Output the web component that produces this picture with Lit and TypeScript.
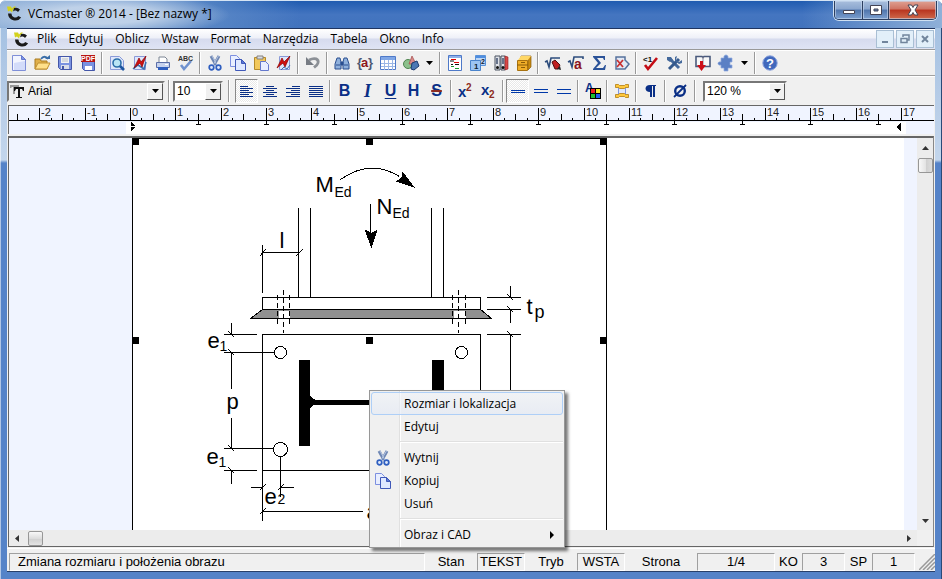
import { LitElement, html, svg, css, nothing } from "lit";
import { customElement } from "lit/decorators.js";
import { classMap } from "lit/directives/class-map.js";

const logo = svg`
  <path d="M0 0l1 5 2-1 2 2 1-3 3-3H7L5 2 4 0z" fill="#d3d21c"/>
  <path d="M7 1.6A6 6 0 0 1 13 3l-2 2.4A3.4 3.4 0 0 0 6 5z" fill="#1b1b1b"/>
  <path d="M1 7h3.4a3.8 3.8 0 0 0 6.8 2.4l3 1.6A7.3 7.3 0 0 1 1 7z" fill="#1b1b1b"/>`;

const scissors = svg`
  <path d="M4 1l5 9M12 1L7 10" stroke="#6f87b4" stroke-width="3"/>
  <path d="M5 1l5 9M11.500 1L6 10" stroke="#c4d2ea" stroke-width=".8"/>
  <circle cx="4.500" cy="12.500" r="2.300" fill="#dfe8fa" stroke="#2f5fc0" stroke-width="1.700"/>
  <circle cx="11.500" cy="12.500" r="2.300" fill="#dfe8fa" stroke="#2f5fc0" stroke-width="1.700"/>`;

const copy = svg`
  <path d="M.5.5h6l3 3v8h-9z" fill="#e8eeff" stroke="#7c8fe0"/>
  <path d="M5.500 4.500h6l4 4v7h-10z" fill="#dfe8ff" stroke="#3f58b8"/>
  <path d="M11.500 4.500v4h4z" fill="#5a78d8" stroke="#3f58b8"/>`;

const icons: Record<string, unknown> = {
  new: svg`<path d="M1.500.5h9l4 4v11h-13z" fill="#f2f5ff" stroke="#7f8fd8"/><path d="M3 8l11-2v9H3z" fill="#d3dcfa"/><path d="M10.500.5v4h4z" fill="#7f95e8" stroke="#6478cc"/>`,
  open: svg`<path d="M1 4h5l1 2h6v8H1z" fill="#e0b04a" stroke="#a97a1e"/><path d="M1 14L4 8h12l-3 6z" fill="#ffe08a" stroke="#c09030"/><path d="M7 4c2-3 5-3 7 0" fill="none" stroke="#3a6ea8" stroke-width="1.800"/><path d="M11 4h5V0z" fill="#3a6ea8"/>`,
  save: svg`<path d="M1.500 1.500h13v13h-11l-2-2z" fill="#7a92e0" stroke="#4356a8"/><path d="M4 2h8v6H4z" fill="#f0f2f4"/><path d="M5 4h6M5 6h6" stroke="#b9bec8"/><path d="M4 10h8v4H4z" fill="#d8dce8"/><path d="M5 11h2v3H5z" fill="#4356a8"/>`,
  pdf: svg`<path d="M2.500 4.500h12v11h-10l-2-2z" fill="#7a92e0" stroke="#4356a8"/><path d="M5 11h7v4H5z" fill="#fff"/><path d="M1 0h14v7H1z" fill="#b81414"/><text x="1" y="6" font-size="7" font-weight="bold" fill="#fff">PDF</text>`,
  preview: svg`<path d="M1.500 1.500h9l4 4v9h-13z" fill="#dfe7fb" stroke="#8a9ad8"/><circle cx="8" cy="8" r="4" fill="#b9e4f4" stroke="#2b6ea8" stroke-width="1.600"/><path d="M11 11l4 4" stroke="#1c56a0" stroke-width="2.600"/>`,
  pageCheck: svg`<path d="M2.500 1.500h11v13h-11z" fill="#dfe7fb" stroke="#8a9ad8"/><path d="M1 14l5-4 6 4 2-7" fill="none" stroke="#3b6fb0" stroke-width="1.600"/><path d="M2 13L7 3l2 4 5-6-4 11-2-4z" fill="#d01010" stroke="#8a0000" stroke-width=".7"/>`,
  print: svg`<path d="M4 8V2h6l2 2v4z" fill="#fff" stroke="#7d8694"/><path d="M1.500 7.500h13v5h-13z" fill="#c6d2ee" stroke="#5a6ea8"/><path d="M3 12h10v3H3z" fill="#2f5fc0"/><path d="M10 9h3v1h-3z" fill="#fff"/>`,
  spell: svg`<text x="0" y="6" font-size="7" font-weight="bold" fill="#333">ABC</text><path d="M3 10l3 4 7-8" fill="none" stroke="#6f92cf" stroke-width="2.600"/>`,
  cut: scissors,
  copy,
  paste: svg`<path d="M1.500 2.500h11v12h-11z" fill="#f2c85a" stroke="#b58a2a"/><path d="M4 1h6v3H4z" fill="#d8dce4" stroke="#85807a"/><path d="M7.500 6.500h5l3 3v6h-8z" fill="#e8eeff" stroke="#6478cc"/>`,
  pageDel: svg`<path d="M3.500 1.500h10v13h-10z" fill="#dfe7fb" stroke="#8a9ad8"/><path d="M5 15l3-3 3 2 3-4" fill="none" stroke="#3b6fb0"/><path d="M1 13L6 3l2 4 6-6-5 11-2-4z" fill="#d01010" stroke="#8a0000" stroke-width=".7"/>`,
  undo: svg`<path d="M4 5c6-3 10-1 9 3-.5 2-2 3-4 4.500" fill="none" stroke="#8c9096" stroke-width="2.800"/><path d="M1 2v8h8z" fill="#777c84"/>`,
  find: svg`<path d="M3 3h3l1 4v7H1V9zM10 3h3l2 6v5H9V7z" fill="#8fb0dc" stroke="#2b4f90"/><path d="M7 7h2v3H7zM2 10h4M10 10h4" stroke="#2b4f90" fill="#2b4f90"/>`,
  brace: svg`<text x="0" y="12" font-size="13" font-weight="bold" fill="#4c5874">{</text><text x="4" y="12" font-size="13" font-weight="bold" fill="#8c1420">a</text><text x="11" y="12" font-size="13" font-weight="bold" fill="#4c5874">}</text>`,
  table: svg`<path d="M.5 1.500h15v13H.5z" fill="#fff" stroke="#4e79c8"/><path d="M1 2h14v3H1z" fill="#7fa6e6"/><path d="M1 8.500h14M1 11.500h14M4.500 5v10M8.500 5v10M12.500 5v10" stroke="#9ab6e6"/>`,
  shapes: svg`<circle cx="5" cy="9" r="4.500" fill="#8cc08c" stroke="#4f8450"/><path d="M9 1l4 8H6z" fill="#d88a8a" stroke="#a04848" stroke-width=".7"/><path d="M9 8l5-2 2 5-5 4-3-1z" fill="#4c78b4" stroke="#1d3c70"/>`,
  doc: svg`<path d="M1.500.5h13v15h-13z" fill="#fff" stroke="#4e79c8"/><path d="M2 1h12v2H2z" fill="#8fb0e8"/><path d="M4 4.500h5M7 7.500h5" stroke="#d00"/><path d="M3 6h4" stroke="#111"/><path d="M4 9.500h2M8 9.500h4" stroke="#111"/><path d="M4 11.500h3M8 13.500h4" stroke="#1a9a30"/>`,
  pages: svg`<path d="M5.500.5h10v10h-10z" fill="#bcd6f6" stroke="#5a92d8"/><path d="M6 1h9v2H6z" fill="#4f8ee0"/><path d="M.5 5.500h10v10H.5z" fill="#9cc4f2" stroke="#4a84cc"/><text x="4" y="14" font-size="8" fill="#123">1</text><text x="11" y="9" font-size="7" fill="#123">2</text>`,
  binders: svg`<path d="M2 1h5v14H2zM8 1h4v14H8z" fill="#dfe2e8" stroke="#4b5260"/><path d="M12 1l3 1v12l-3 1z" fill="#d84848" stroke="#902020" stroke-width=".6"/><path d="M4 3v6M10 3v6" stroke="#68748c" stroke-width="2"/><circle cx="4.500" cy="12.500" r="1.500"/><circle cx="10" cy="12.500" r="1.500"/>`,
  cabinet: svg`<path d="M5 1h10v11l-3 3V4H5z" fill="#c88a10" stroke="#8a5c08" stroke-width=".7"/><path d="M5 1h10l-3 4H2z" fill="#ffd766"/><path d="M1.500 5.500h10v10h-10z" fill="#f0ae28" stroke="#a87210"/><path d="M1 10h11M5 7.500h4M5 12.500h4" stroke="#8a5c08"/>`,
  rootPen: svg`<path d="M0 7l2-1 2 6 2-9h9" fill="none" stroke="#2c4c7c" stroke-width="1.600"/><path d="M7 7l3-2 5 5-2 4-3 0z" fill="#c02020" stroke="#501010"/><path d="M12 14l4 1-1-4z" fill="#222"/>`,
  rootA: svg`<path d="M0 7l2-1 2 6 2-10h9v2" fill="none" stroke="#2c4c7c" stroke-width="1.600"/><text x="6" y="14" font-size="14" font-weight="bold" fill="#8c1420">a</text>`,
  sigma: svg`<path d="M2 1h12v4h-1l-1-2H6l4 5-5 5h7l2-3h1l-1 5H2v-1l5-6-5-6z" fill="#2a5298"/>`,
  housex: svg`<path d="M2 14V2h9v3l4 4-4 5z" fill="#e2e9f5" stroke="#55719c" stroke-width="1.500"/><path d="M3 5l6 7M9 5l-6 7" stroke="#c83030" stroke-width="1.800"/>`,
  check1: svg`<text x="0" y="7" font-size="8" fill="#111">&lt;1</text><path d="M2 10l3 4L14 3" fill="none" stroke="#c40c14" stroke-width="2.600"/>`,
  tools: svg`<path d="M3 3l10 10" stroke="#44699c" stroke-width="3"/><path d="M13 4L3 14" stroke="#34598c" stroke-width="3"/><path d="M1 2h4l2 3-3 2-3-2zM11 1l-1 4 3 2 3-2v3l-3 1-4-3V2z" fill="#44699c"/>`,
  bookDown: svg`<path d="M1 1.500h6l1 1 1-1h6v10H1z" fill="#f8f8f8" stroke="#4a5a7c" stroke-width="1.600"/><path d="M8 2v9" stroke="#889"/><path d="M5 6h3v4h3l-4.500 6L2 10h3z" fill="#cc1018"/>`,
  puzzle: svg`<path d="M6 3c-1-4 5-4 4 0h4v4h-2v3h2v3h-4v3H6v-3H3v-3c-4 1-4-4 0-3V3z" fill="#5b80c4" stroke="#8fabdf" stroke-width=".7"/>`,
  help: svg`<circle cx="8" cy="8" r="7.200" fill="#4168bc" stroke="#8aa2dc"/><text x="4" y="13" font-size="13" font-weight="bold" fill="#fff">?</text>`,
  left: svg`<path d="M1 3.500h8M1 5.500h13M1 7.500h9M1 9.500h13M1 11.500h9M1 13.500h13" stroke="#0a2f86"/>`,
  center: svg`<path d="M4 3.500h8M1 5.500h14M4 7.500h8M1 9.500h14M4 11.500h8M1 13.500h14" stroke="#0a2f86"/>`,
  right: svg`<path d="M7 3.500h8M1 5.500h14M6 7.500h9M1 9.500h14M6 11.500h9M1 13.500h14" stroke="#0a2f86"/>`,
  justify: svg`<path d="M1 3.500h14M1 5.500h14M1 7.500h14M1 9.500h14M1 11.500h14M1 13.500h14" stroke="#0a2f86"/>`,
  line1: svg`<path d="M1 7.500h14M1 9.500h14" stroke="#0038a8"/>`,
  line2: svg`<path d="M1 6.500h14M1 9.500h14" stroke="#0038a8"/>`,
  line3: svg`<path d="M1 6.500h14M1 10.500h14" stroke="#0038a8"/>`,
  sup: svg`<text x="0" y="14" font-size="15" font-weight="bold" fill="#0a2f86">x</text><text x="8" y="8" font-size="10" font-weight="bold" fill="#8c2a20">2</text>`,
  sub: svg`<text x="0" y="12" font-size="15" font-weight="bold" fill="#0a2f86">x</text><text x="8" y="15" font-size="10" font-weight="bold" fill="#8c2a20">2</text>`,
  color: svg`<text x="0" y="9" font-size="12" font-weight="bold" fill="#0a2f86">A</text><path d="M5 5h11v11H5z" fill="#000"/><path d="M6 6h4v4H6z" fill="#f02020"/><path d="M11 6h4v4h-4z" fill="#f8e820"/><path d="M6 11h4v4H6z" fill="#20c030"/><path d="M11 11h4v4h-4z" fill="#2060f0"/>`,
  fit: svg`<path d="M4.500 4.500h7v7h-7z" fill="#dfe7fb" stroke="#7f95e0"/><path d="M1.500 1.500h3l1 1h5l1-1h3v3h-3l-1 1h-5l-1-1h-3zM1.500 11.500h3l1-1h5l1 1h3v3h-3l-1-1h-5l-1 1h-3z" fill="#ffc83c" stroke="#b07c10" stroke-width=".8"/>`,
  para: svg`<path d="M13 2v1h-1v11h-2V3H9v11H7V9C1 9 1 2 7 2z" fill="#0a2f86"/>`,
  diameter: svg`<circle cx="8" cy="8" r="4.800" fill="none" stroke="#0a2f86" stroke-width="2.400"/><path d="M2 14L14 2" stroke="#0a2f86" stroke-width="1.800"/>`,
};

const icon = (name: string) =>
  html`<svg class="icon" viewBox="0 0 16 16" fill="#111" aria-hidden="true">${icons[name]}</svg>`;

type Tool = [string, string];

const mainTools: Tool[][] = [
  [["new", "Nowy"], ["open", "Otwórz"], ["save", "Zapisz"], ["pdf", "PDF"]],
  [["preview", "Podgląd"], ["pageCheck", "Strona"], ["print", "Drukuj"], ["spell", "Pisownia"]],
  [["cut", "Wytnij"], ["copy", "Kopiuj"], ["paste", "Wklej"], ["pageDel", "Usuń stronę"]],
  [["undo", "Cofnij"]],
  [["find", "Znajdź"], ["brace", "Zmienna"], ["table", "Tabela"], ["shapes", "Kształty"], ["drop", "Więcej kształtów"]],
  [["doc", "Dokument"], ["pages", "Strony"], ["binders", "Biblioteka"], ["cabinet", "Archiwum"]],
  [["rootPen", "Edytuj wzór"], ["rootA", "Wzór"], ["sigma", "Suma"], ["housex", "Przekrój"]],
  [["check1", "Sprawdź"], ["tools", "Opcje"]],
  [["bookDown", "Importuj"], ["puzzle", "Dodatki"], ["drop", "Więcej dodatków"]],
  [["help", "Pomoc"]],
];

const formatTools: Tool[][] = [
  [["left", "Do lewej"], ["center", "Do środka"], ["right", "Do prawej"], ["justify", "Wyjustuj"]],
  [["B", "Pogrubienie"], ["I", "Kursywa"], ["U", "Podkreślenie"], ["H", "Wyróżnienie"], ["S", "Przekreślenie"]],
  [["sup", "Indeks górny"], ["sub", "Indeks dolny"]],
  [["line1", "Odstęp 1"], ["line2", "Odstęp 1,5"], ["line3", "Odstęp 2"]],
  [["color", "Kolor"]],
  [["fit", "Dopasuj"]],
  [["para", "Znaki akapitu"]],
  [["diameter", "Średnica"]],
];

const pressed = new Set(["left", "line1"]);

/** Combo box with a classic sunken frame. */
@customElement("combo-box")
export class ComboBox extends LitElement {
  static properties = { value: {}, label: {}, glyph: { type: Boolean } };
  declare value: string;
  declare label: string;
  declare glyph: boolean;

  static styles = css`
    :host { display: block; height: 21px; box-sizing: border-box; border: 2px solid; border-color: #777 #eee #eee #777; background: #fff; }
    label { display: flex; height: 100%; }
    .tt { flex: none; width: 17px; height: 17px; background: #eee; }
    select { flex: 1; min-width: 0; appearance: none; border: 0; margin: 0; padding: 0 2px; background: #fff; color: #000; font: 12px "Liberation Sans", Arial, sans-serif; }
    :host([glyph]) select { background: #eee; }
    .arrow { flex: none; width: 16px; box-sizing: border-box; background: #f0f0f0; border: 1px solid; border-color: #fff #555 #555 #fff; display: grid; place-items: center; }
    .arrow svg { width: 7px; height: 4px; }
  `;

  render() {
    return html`<label>
      ${this.glyph
        ? html`<svg class="tt" viewBox="0 0 17 17" aria-hidden="true">
            <path d="M1 2h9v3H9L8 4H6v7H4V4H3L2 5H1z" fill="#999" />
            <path d="M5 4h10v4h-1l-1-2h-2v8h2v1H7v-1h2V6H7L6 8H5z" fill="#111" />
          </svg>`
        : nothing}
      <select aria-label=${this.label}><option>${this.value}</option></select>
      <span class="arrow"><svg viewBox="0 0 7 4"><path d="M0 0h7L3.500 4z" /></svg></span>
    </label>`;
  }
}

/** Tool bar row of grouped buttons. */
@customElement("tool-group")
export class ToolGroup extends LitElement {
  static properties = { groups: { attribute: false } };
  declare groups: Tool[][];

  static styles = css`
    :host { display: flex; align-items: center; }
    .sep { flex: none; width: 6px; height: 22px; box-sizing: border-box; border-left: 2px solid transparent; background: linear-gradient(90deg, #999 0 1px, #fff 1px 2px, transparent 2px) no-repeat content-box; }
    button { flex: none; width: 23px; height: 24px; padding: 0; border: 1px solid transparent; background: none; display: grid; justify-content: center; align-content: center; color: #0a2f86; font: bold 16px/20px "Liberation Sans", Arial, sans-serif; }
    button.drop { width: 15px; }
    button.on { border-color: #888 #fff #fff #888; background: repeating-conic-gradient(#fff 0 25%, #e8e8e8 0 50%) 0 0 / 2px 2px; }
    .icon { width: 16px; height: 16px; display: block; overflow: visible; font-family: "Liberation Sans", Arial, sans-serif; }
    .tri { width: 7px; height: 4px; display: block; }
    .I { font-family: "Liberation Serif", serif; font-style: italic; font-size: 18px; }
    .U { text-decoration: underline; text-underline-offset: 2px; }
    .S { text-decoration: line-through #8c2a20 2px; }
  `;

  private face(name: string) {
    if (name === "drop") return html`<svg class="tri" viewBox="0 0 7 4"><path d="M0 0h7L3.500 4z" /></svg>`;
    return name.length === 1 ? html`<span class=${name}>${name}</span>` : icon(name);
  }

  render() {
    return this.groups.map(
      (group, i) => html`${i ? html`<span class="sep"></span>` : nothing}${group.map(
        ([name, label]) => html`<button class=${classMap({ on: pressed.has(name), drop: name === "drop" })} aria-label=${label}>${this.face(name)}</button>`
      )}`
    );
  }
}

/** Horizontal centimetre ruler with tab stops. */
@customElement("page-ruler")
export class PageRuler extends LitElement {
  static styles = css`
    :host { display: block; height: 29px; overflow: hidden; background: #f0f4ff; border: solid #666; border-width: 1px 0 0 1px; box-sizing: border-box; }
    svg { display: block; width: 100%; height: 28px; font: 11px "Liberation Sans", Arial, sans-serif; shape-rendering: crispEdges; }
  `;

  render() {
    const zero = 121;
    const unit = 45.35;
    const quarters = Array.from({ length: 80 }, (_, i) => i - 10);
    return html`<svg>
      <rect x="117" y="16" width="780" height="12" fill="#fff" />
      <rect x="0" y="14" width="100%" height="1" />
      ${quarters.map((q) => {
        const x = Math.round(zero + (q * unit) / 4);
        const h = q % 4 === 0 ? 12 : q % 2 === 0 ? 6 : 2;
        return svg`<rect x=${x} y=${14 - h} width="1" height=${h} />
          ${q % 4 === 0 && q >= -8 ? svg`<text x=${x + 2} y="10" fill="#222">${q / 4}</text>` : nothing}`;
      })}
      ${Array.from({ length: 11 }, (_, i) => {
        const x = Math.round(zero + (i + 1) * 1.5 * unit);
        return svg`<path d="M${x - 2} 18h5v1h-5zM${x} 15h1v3h-1z" />`;
      })}
      <path d="M122 16l4 4h-4zM122 21h4l-4 4z" />
      <path d="M892 16v9l-5-4z" />
    </svg>`;
  }
}

/** Base plate connection drawing inside its selection frame. */
@customElement("plate-drawing")
export class PlateDrawing extends LitElement {
  static styles = css`
    :host { display: block; }
    svg { display: block; width: 475px; height: 392px; shape-rendering: crispEdges; font-family: "Liberation Sans", Arial, sans-serif; }
    .line { fill: none; stroke: #000; }
    .dash { fill: none; stroke: #000; stroke-dasharray: 5 3; }
    .hollow { fill: #fff; stroke: #000; }
    .big { font-size: 22px; }
    .mid { font-size: 18px; }
    .small { font-size: 14px; }
  `;

  render() {
    const handles = [[132, 138], [366, 138], [600, 138], [132, 337], [366, 337], [600, 337]];
    return html`<svg viewBox="131.5 137.5 475 392" role="img" aria-label="Podstawa słupa">
      <path class="line" d="M132 600V138H606V600" />
      ${handles.map(([x, y]) => svg`<rect x=${x - 0.5} y=${y - 0.5} width="7" height="7" />`)}
      <path class="line" d="M298 207V297M310 207V297M431 207V297M443 207V297" />
      <path class="line" d="M340 179Q370 158 399 176M370 203V232" />
      <path d="M414 187L402 171L401 177L395 181ZM364 229L371 232L377 229L371 248Z" />
      <path class="line" d="M262 244V292M262 252H298M259 256L265 249M295 256L302 249" />
      <path d="M262 309L250 318H491L480 309Z" fill="#909090" stroke="#000" />
      <path class="hollow" d="M262 297H480V309H262Z" />
      <path d="M278 310H289V318H278ZM453 310H465V318H453Z" fill="#fff" />
      <path class="line" d="M250 318H491" />
      <path class="dash" d="M277 294V326M289 294V326M283 289V332M452 294V326M465 294V326M458 289V332" />
      <path class="line" d="M486 297H520M486 309H520M486 334H520M510 285V297M510 309V322M510 334V480M507 294L513 300M507 306L513 312M507 331L513 337" />
      <path class="line" d="M262 520V334H480V470H262" />
      <path class="line" d="M223 334H256M223 352H274M223 448H273M223 470H256M231 322V334M231 352V388M231 417V448M231 470V483" />
      <path class="line" d="M228 331L234 337M228 349L234 355M228 445L234 451M228 467L234 473" />
      <path class="line" d="M280 456V496M250 487H262M280 487H293M259 490L265 484M277 490L283 484M262 511H362M259 514L265 508" />
      <circle class="hollow" cx="280" cy="352" r="6" />
      <circle class="hollow" cx="280" cy="449" r="7" />
      <circle class="hollow" cx="461" cy="352" r="6" />
      <path d="M298 359H309V395L314 399H427L431 395V359H443V445H431V408L427 404H314L309 408V445H298Z" />
      <text class="big" x="315" y="191">M</text><text class="small" x="334" y="196">Ed</text>
      <text class="big" x="376" y="213">N</text><text class="small" x="392" y="217">Ed</text>
      <text class="big" x="279" y="247">l</text>
      <text class="big" x="526" y="313">t</text><text class="mid" x="534" y="317">p</text>
      <text class="big" x="207" y="347">e</text><text class="small" x="219" y="350">1</text>
      <text class="big" x="226" y="408">p</text>
      <text class="big" x="206" y="463">e</text><text class="small" x="218" y="466">1</text>
      <text class="big" x="264" y="503">e</text><text class="small" x="277" y="503">2</text>
      <text class="big" x="366" y="518">a</text>
    </svg>`;
  }
}

/** Context menu shown over the selected picture. */
@customElement("context-menu")
export class ContextMenu extends LitElement {
  static styles = css`
    :host { display: block; width: 196px; box-sizing: border-box; padding: 1px; border: 1px solid #979797; background: linear-gradient(90deg, transparent 29px, #e0e0e0 29px 30px, #fff 30px 31px, transparent 31px) 0 0 / 100% 100% #f0f0f0; box-shadow: 3px 3px 3px #0008; }
    button { display: flex; align-items: center; width: 100%; height: 23px; box-sizing: border-box; padding: 0 8px 0 3px; border: 1px solid transparent; border-radius: 3px; background: none; color: #000; font: 12px/20px "Open Sans", "Noto Sans", sans-serif; text-align: left; }
    button.hot { border-color: #aecff7; background: linear-gradient(#f1f4f988, #e4eaf5aa); }
    .slot { flex: none; width: 29px; display: block; }
    .icon { width: 16px; height: 16px; display: block; }
    .text { flex: 1; }
    .more { width: 4px; height: 8px; }
    hr { height: 2px; margin: 3px 0 3px 29px; border: 0; background: linear-gradient(#e0e0e0 50%, #fff 50%); }
  `;

  private item(text: string, opts: { hot?: boolean; pic?: string; more?: boolean } = {}) {
    return html`<button role="menuitem" class=${classMap({ hot: !!opts.hot })}>
      <span class="slot">${opts.pic ? icon(opts.pic) : nothing}</span><span class="text">${text}</span>
      ${opts.more ? html`<svg class="more" viewBox="0 0 4 8"><path d="M0 0l4 4-4 4z" /></svg>` : nothing}
    </button>`;
  }

  render() {
    return html`${this.item("Rozmiar i lokalizacja", { hot: true })} ${this.item("Edytuj")}
      <hr />
      ${this.item("Wytnij", { pic: "cut" })} ${this.item("Kopiuj", { pic: "copy" })} ${this.item("Usuń")}
      <hr />
      ${this.item("Obraz i CAD", { more: true })}`;
  }
}

@customElement("app-root")
export class AppRoot extends LitElement {
  static styles = css`
    :host { display: flex; flex-direction: column; height: 100vh; box-sizing: border-box; padding: 0 7px 7px; overflow: hidden; color: #000; font: 12px/18px "Open Sans", "Noto Sans", sans-serif;
      background: linear-gradient(90deg, #fff8 0 1px, transparent 1px calc(100% - 1px), #2a4a78 calc(100% - 1px)), linear-gradient(#9ebde0 0, #b9cee8 110px, #c3d6ec 160px, #5583c8 163px, #5583c8 100%); border-radius: 6px 6px 0 0; }
    svg { display: block; }
    .titlebar { flex: none; display: flex; align-items: flex-start; height: 28px; margin: 0 -7px; padding: 0 5px 0 7px; border-top: 1px solid #d5e4f4; border-radius: 6px 6px 0 0; box-sizing: border-box;
      background: radial-gradient(ellipse 130px 22px at 100px 14px, #c4d5eaee 40%, #c4d5ea00 100%), linear-gradient(90deg, #8fb0d8 0, #5f8cc8 180px, #2a62b000 300px, #2a62b000 calc(100% - 140px), #8fb0d8 100%), linear-gradient(#1f5bb0, #4475c0 50%, #4173bd); }
    .logo { flex: none; width: 15px; height: 15px; }
    .titlebar .logo { margin-top: 5px; }
    h1 { flex: 1; margin: 4px 0 0 6px; font: inherit; }
    .winbtns { display: flex; height: 18px; border: 1px solid #2c3f60; border-top: 0; border-radius: 0 0 5px 5px; overflow: hidden; box-shadow: 0 0 0 1px #cfe0f2; }
    .winbtns button { display: grid; place-items: center; width: 28px; padding: 0; border: 0; border-right: 1px solid #2c3f60; background: linear-gradient(#a8bedc, #8aa6ce 45%, #4f75ac 50%, #7da0d0); box-shadow: inset 0 0 0 1px #c8d8ee99; }
    .winbtns button.mid { width: 26px; }
    .winbtns button.close { width: 47px; border: 0; background: linear-gradient(#dfa294, #cf7363 45%, #b8341f 50%, #cf6a4c); }
    .winbtns svg { width: 14px; height: 12px; }
    .body { flex: 1; min-height: 0; display: flex; flex-direction: column; border-top: 1px solid #1f3560; background: #f0f0f0; }
    nav { flex: none; display: flex; align-items: center; height: 21px; padding: 0 1px 0 7px; background: linear-gradient(#fff, #eef0f8 45%, #d6dbee 50%, #dfe4f4); border-bottom: 1px solid #999; box-sizing: border-box; }
    nav a { padding: 0 6px; color: inherit; text-decoration: none; }
    .menus { flex: 1; display: flex; padding-left: 2px; }
    .mdi { display: flex; gap: 2px; }
    .mdi button { display: grid; place-items: center; width: 18px; height: 18px; padding: 0; border: 1px solid #a9bfd4; background: #e2eff9; }
    .mdi svg { width: 10px; height: 10px; }
    .bar { flex: none; display: flex; align-items: center; height: 26px; border-top: 1px solid #fff; border-bottom: 1px solid #a0a0a0; box-sizing: border-box; }
    .bar.fmt { height: 29px; border-bottom: 0; }
    .fontbox { width: 158px; }
    .sizebox { width: 50px; }
    .zoombox { width: 84px; margin-left: 4px; }
    .rule { flex: none; width: 2px; height: 22px; margin: 0 3px; background: linear-gradient(90deg, #999 50%, #fff 50%); }
    .rule.wide { margin: 0 5px; }
    page-ruler { flex: none; margin: 0 1px; }
    .workspace { flex: 1; min-height: 0; position: relative; display: grid; grid-template: minmax(0, 1fr) 16px / minmax(0, 1fr) 16px; margin: 2px 1px 1px; border: 1px solid #666; border-top-width: 2px; border-right-color: #888; }
    .view { display: flex; min-height: 0; overflow: hidden; background: #f0f4ff; }
    .paper { flex: 1; margin: 0 13px 0 123px; background: #fff; }
    .scroll { display: flex; align-items: center; background: #ececec; }
    .scroll.v { flex-direction: column; }
    .scroll.h { grid-column: 1; }
    .scroll button { display: grid; place-items: center; width: 17px; height: 16px; padding: 0; border: 0; background: none; }
    .scroll.v button { width: 16px; height: 20px; }
    .scroll svg { width: 7px; height: 7px; fill: #333; }
    .track { flex: 1; }
    .thumb { width: 13px; height: 13px; margin: 0 2px; border: 1px solid #979797; border-radius: 2px; background: linear-gradient(#f8f8f8, #ddd 50%, #cfcfcf 51%, #e4e4e4); }
    .v .thumb { margin: 0; background: linear-gradient(90deg, #f8f8f8, #e4e4e4 50%, #cfcfcf 51%, #ddd); }
    .corner { background: #f0f0f0; }
    context-menu { position: absolute; left: 360px; top: 252px; }
    footer { flex: none; display: flex; align-items: center; height: 24px; padding: 3px 0 0 2px; border-top: 1px solid #fff; border-bottom: 1px solid #28406a; box-sizing: border-box; font: 13px/16px "Liberation Sans", Arial, sans-serif; }
    .cell { flex: none; height: 18px; box-sizing: border-box; border: 1px solid; border-color: #a0a0a0 #fff #fff #a0a0a0; text-align: center; }
    .msg { flex: 1; padding-left: 8px; text-align: left; }
    .tag { flex: none; text-align: center; }
    .w48 { width: 48px; }
    .w43 { width: 43px; }
    .w78 { width: 78px; }
    .t52 { width: 52px; }
    .t72 { width: 72px; }
    .t27 { width: 27px; }
    .grip { flex: none; width: 16px; height: 16px; margin-left: 4px; stroke: #999; }
  `;

  render() {
    const menus = ["Plik", "Edytuj", "Oblicz", "Wstaw", "Format", "Narzędzia", "Tabela", "Okno", "Info"];
    return html`
      <header class="titlebar">
        <svg class="logo" viewBox="0 0 15 14">${logo}</svg>
        <h1>VCmaster ® 2014 - [Bez nazwy *]</h1>
        <div class="winbtns">
          <button aria-label="Minimalizuj"><svg viewBox="0 0 14 12"><path d="M1.500 6.500h11v3h-11z" fill="#fff" stroke="#445" /></svg></button>
          <button class="mid" aria-label="Maksymalizuj"><svg viewBox="0 0 14 12"><path d="M1.500 1.500h11v9h-11zM5 5v2h4V5z" fill="#fff" fill-rule="evenodd" stroke="#445" /></svg></button>
          <button class="close" aria-label="Zamknij"><svg viewBox="0 0 14 12"><path d="M2 1h3.500L7 3.500 8.500 1H12L9 6l3 5H8.500L7 8.500 5.500 11H2l3-5z" fill="#fff" stroke="#445" /></svg></button>
        </div>
      </header>
      <div class="body">
        <nav>
          <svg class="logo" viewBox="0 0 15 14">${logo}</svg>
          <div class="menus">${menus.map((m) => html`<a href="#">${m}</a>`)}</div>
          <div class="mdi">
            <button aria-label="Minimalizuj dokument"><svg viewBox="0 0 10 10"><path d="M2 7h6v2H2z" fill="#71859c" /></svg></button>
            <button aria-label="Przywróć dokument"><svg viewBox="0 0 10 10"><path d="M3 3V1h6v5H7M1 4.500h6v4H1z" fill="none" stroke="#71859c" stroke-width="1.500" /></svg></button>
            <button aria-label="Zamknij dokument"><svg viewBox="0 0 10 10"><path d="M2 2l6 6M8 2L2 8" stroke="#71859c" stroke-width="2" /></svg></button>
          </div>
        </nav>
        <div class="bar"><tool-group .groups=${mainTools}></tool-group></div>
        <div class="bar fmt">
          <combo-box class="fontbox" glyph value="Arial" label="Czcionka"></combo-box>
          <span class="rule"></span>
          <combo-box class="sizebox" value="10" label="Rozmiar"></combo-box>
          <span class="rule wide"></span>
          <tool-group .groups=${formatTools}></tool-group>
          <span class="rule"></span>
          <combo-box class="zoombox" value="120 %" label="Powiększenie"></combo-box>
        </div>
        <page-ruler></page-ruler>
        <main class="workspace">
          <div class="view"><div class="paper"><plate-drawing></plate-drawing></div></div>
          <div class="scroll v">
            <button aria-label="W górę"><svg viewBox="0 0 7 7"><path d="M0 5l3.500-4L7 5z" /></svg></button>
            <div class="thumb"></div><div class="track"></div>
            <button aria-label="W dół"><svg viewBox="0 0 7 7"><path d="M0 2l3.500 4L7 2z" /></svg></button>
          </div>
          <div class="scroll h">
            <button aria-label="W lewo"><svg viewBox="0 0 7 7"><path d="M5 0L1 3.500 5 7z" /></svg></button>
            <div class="thumb"></div><div class="track"></div>
            <button aria-label="W prawo"><svg viewBox="0 0 7 7"><path d="M2 0l4 3.500L2 7z" /></svg></button>
          </div>
          <div class="corner"></div>
          <context-menu role="menu"></context-menu>
        </main>
        <footer>
          <span class="cell msg">Zmiana rozmiaru i położenia obrazu</span>
          <span class="tag t52">Stan</span><span class="cell w48">TEKST</span>
          <span class="tag t52">Tryb</span><span class="cell w48">WSTA</span>
          <span class="tag t72">Strona</span><span class="cell w78">1/4</span>
          <span class="tag t27">KO</span><span class="cell w43">3</span>
          <span class="tag t27">SP</span><span class="cell w43">1</span>
          <svg class="grip" viewBox="0 0 16 16"><path d="M0 16L16 0M4 16L16 4M8 16l8-8M12 16l4-4" stroke-width="1.500" /></svg>
        </footer>
      </div>
    `;
  }
}
